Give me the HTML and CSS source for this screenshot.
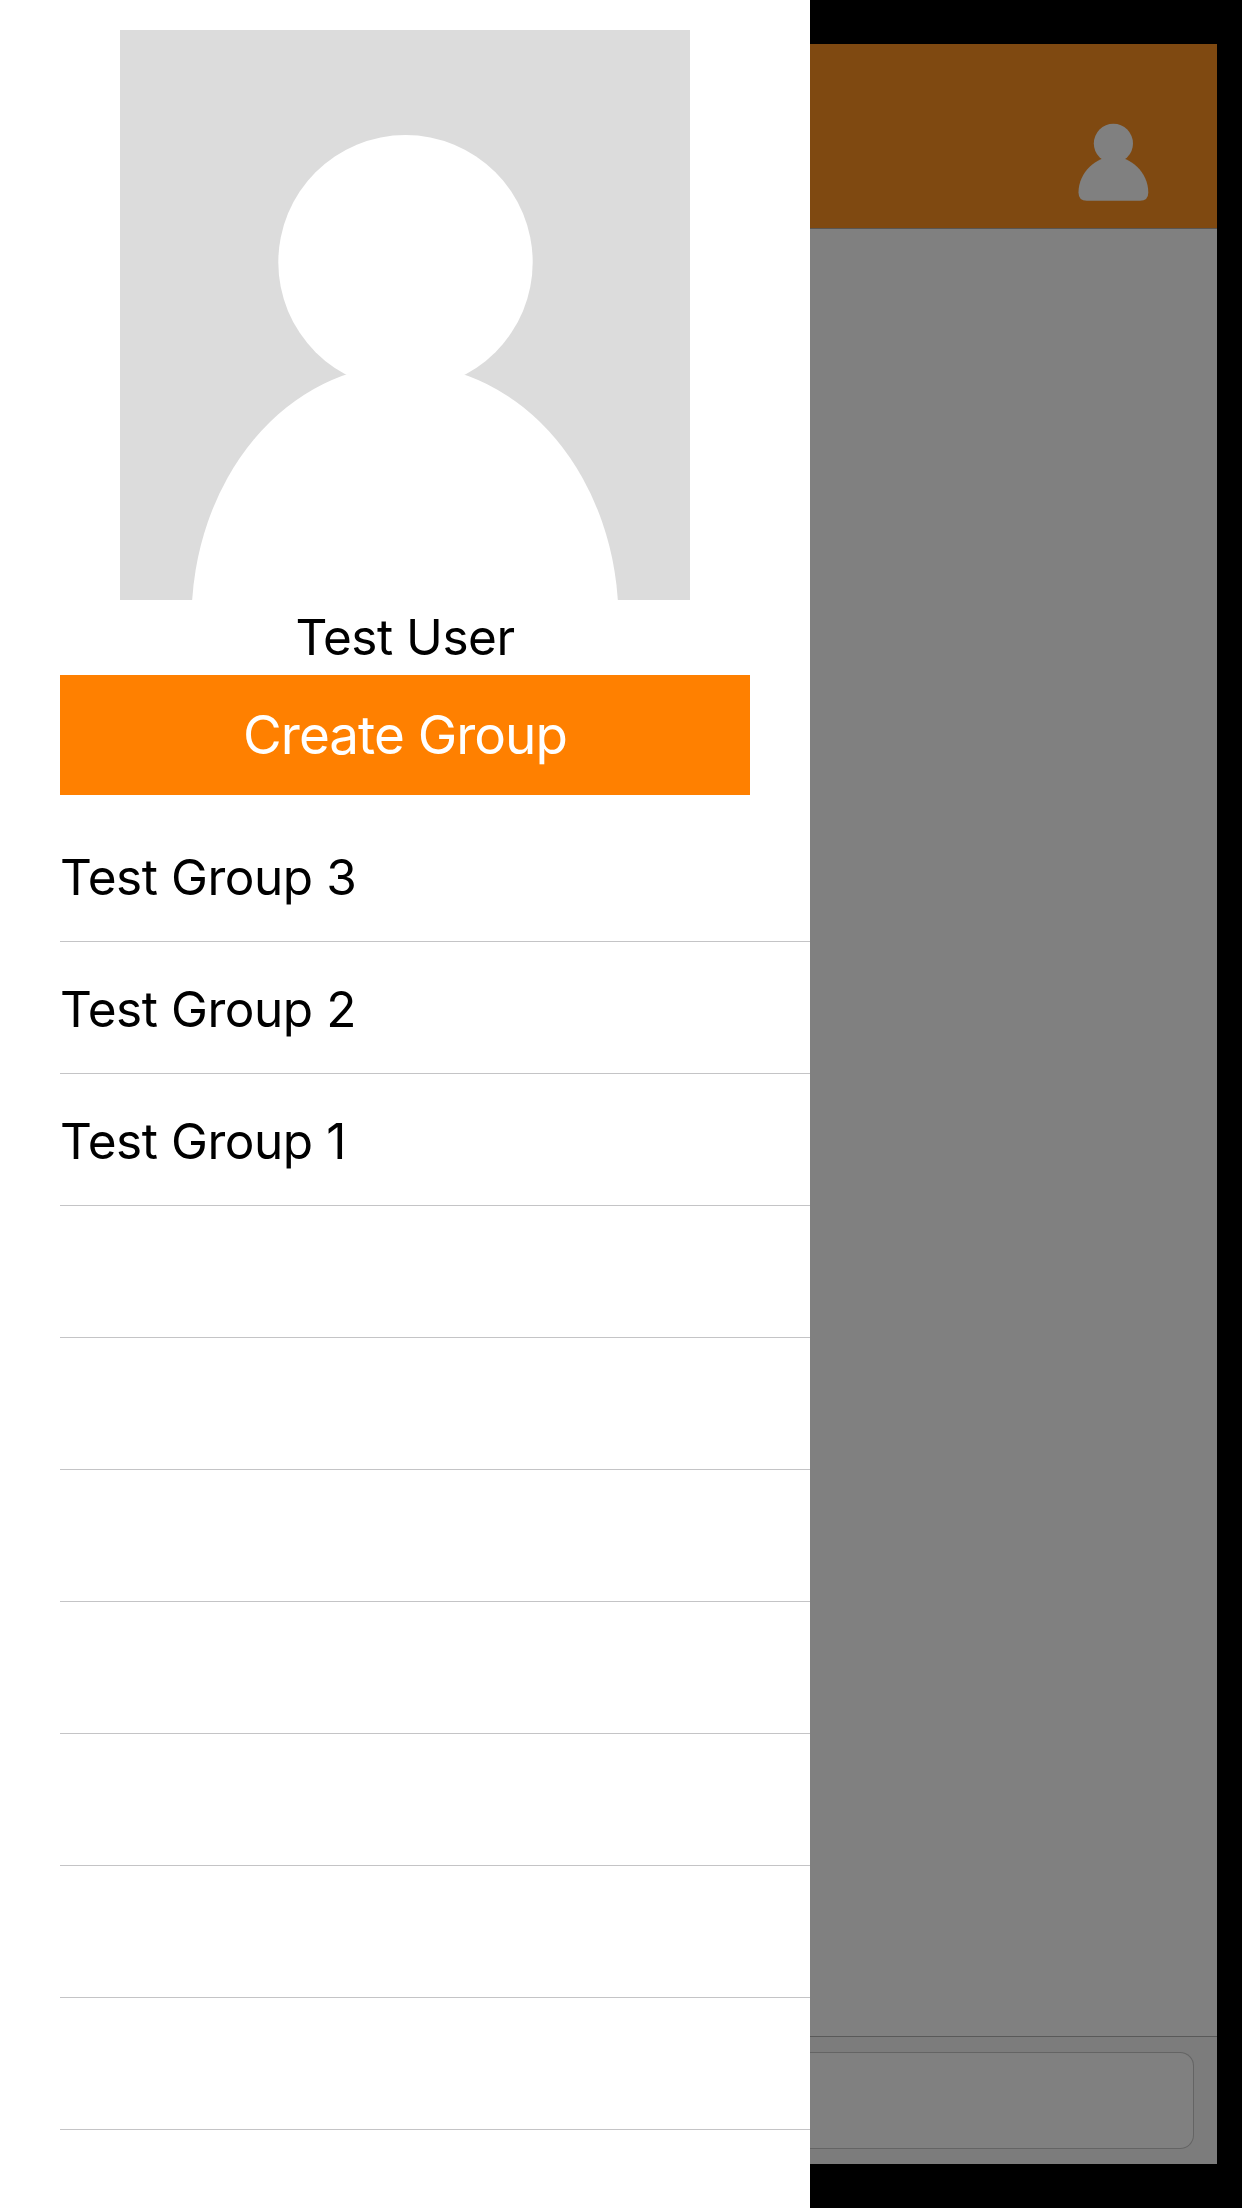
FILE: index.html
```html
<!DOCTYPE html>
<html lang="en">
<head>
<meta charset="utf-8">
<title>Groups</title>
<link rel="stylesheet" href="styles.css">
</head>
<body>
<div class="app">
  <aside class="drawer">
    <svg class="avatar" viewBox="0 0 570 570" role="img" aria-label="Profile picture">
      <rect width="570" height="570" fill="#dcdcdc"/>
      <circle cx="285.5" cy="232.2" r="127.2" fill="#fff"/>
      <ellipse cx="285" cy="590" rx="213.5" ry="255.5" fill="#fff"/>
    </svg>
    <div class="user-name"><span>Test User</span></div>
    <button class="create" type="button"><span>Create Group</span></button>
    <ul class="groups">
      <li><span>Test Group 3</span></li>
      <li><span>Test Group 2</span></li>
      <li><span>Test Group 1</span></li>
      <li></li>
      <li></li>
      <li></li>
      <li></li>
      <li></li>
      <li></li>
      <li></li>
    </ul>
  </aside>
  <main class="stage">
    <header class="topbar">
      <svg class="profile-icon" viewBox="0 0 76 84" aria-label="Profile">
        <g fill="#808080">
          <circle cx="38.4" cy="24.4" r="19.6"/>
          <path d="M38.4 37.5C55 37.5 73.3 53 73.3 73.5Q73.3 81.8 65 81.8H11.8Q3.5 81.8 3.5 73.5C3.5 53 21.8 37.5 38.4 37.5Z"/>
        </g>
      </svg>
    </header>
    <div class="messages"></div>
    <footer class="composer"><div class="field"></div></footer>
  </main>
</div>
</body>
</html>
```
FILE: styles.css
```css
* {
  box-sizing: border-box;
}

body {
  margin: 0;
  background: #000;
  font-family: Inter, "Liberation Sans", sans-serif;
  color: #000;
}

.app {
  display: flex;
  width: 1242px;
  height: 2208px;
  overflow: hidden;
}

.drawer {
  display: flex;
  flex-direction: column;
  width: 810px;
  flex: none;
  padding: 30px 0 0 60px;
  background: #fff;
}

.avatar {
  width: 570px;
  height: 570px;
  margin-left: 60px;
  flex: none;
}

.user-name {
  width: 690px;
  height: 75px;
  line-height: 75px;
  text-align: center;
  font-size: 49.5px;
  letter-spacing: -0.5px;
}

.create {
  width: 690px;
  height: 120px;
  padding: 0;
  border: 0;
  background: #ff8000;
  color: #fff;
  font: inherit;
  font-size: 53px;
  letter-spacing: -1px;
  line-height: 120px;
}

.groups {
  margin: 15px 0 0;
  padding: 0;
  list-style: none;
  font-size: 49.5px;
  letter-spacing: -0.45px;
}

.groups li {
  height: 132px;
  border-bottom: 1px solid #c4c4c6;
  line-height: 134px;
}

.stage {
  display: flex;
  flex-direction: column;
  width: 407px;
  height: 2120px;
  margin-top: 44px;
  background: #808080;
}

.topbar {
  display: flex;
  justify-content: flex-end;
  height: 185px;
  padding: 75px 66px 0 0;
  background: #7f4911;
  border-bottom: 1px solid #595654;
}

.profile-icon {
  width: 76px;
  height: 84px;
  filter: blur(0.7px);
}

.messages {
  flex: 1;
}

.composer {
  height: 128px;
  padding: 15px 23px 15px 0;
  background: #7c7c7c;
  border-top: 1px solid #595959;
}

.field {
  height: 97px;
  border: 1px solid #646464;
  border-left: 0;
  border-radius: 0 14px 14px 0;
  background: #808080;
}
```
